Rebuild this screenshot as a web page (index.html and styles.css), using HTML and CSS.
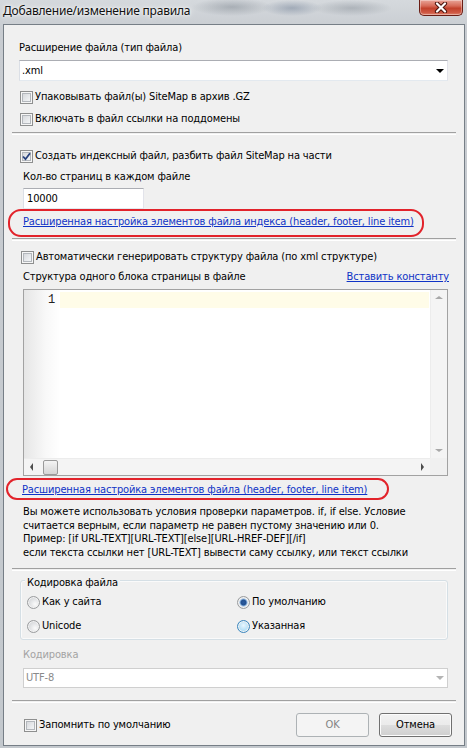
FILE: index.html
```html
<!DOCTYPE html>
<html lang="ru">
<head>
  <meta charset="UTF-8">
  <title>Добавление/изменение правила</title>
  <link rel="stylesheet" href="styles.css">
</head>
<body>
  <div class="window">
    <div class="titlebar">
      <span class="title">Добавление/изменение правила</span>
      <span class="close">
        <svg width="16" height="11" viewBox="0 0 16 11">
          <path d="M4 1.5 L12 9.5 M12 1.5 L4 9.5" stroke="#4a130b" stroke-width="4.2" stroke-linecap="round"/>
          <path d="M4 1.5 L12 9.5 M12 1.5 L4 9.5" stroke="#fff" stroke-width="2.2" stroke-linecap="round"/>
        </svg>
      </span>
    </div>

    <div class="client">
      <div class="pane top">
        <div class="label">Расширение файла (тип файла)</div>
        <div class="combo"><span>.xml</span><i class="arrow"></i></div>
        <label class="check"><span class="box"></span>Упаковывать файл(ы) SiteMap в архив .GZ</label>
        <label class="check second"><span class="box"></span>Включать в файл ссылки на поддомены</label>
      </div>
      <div class="sep"></div>

      <div class="pane index">
        <label class="check"><span class="box"><svg width="9" height="9" viewBox="0 0 9 9"><path d="M1 4.5 L3.5 7.2 L8 1.2" fill="none" stroke="#27417c" stroke-width="1.8"/></svg></span>Создать индексный файл, разбить файл SiteMap на части</label>
        <div class="label indent">Кол-во страниц в каждом файле</div>
        <div class="field">10000</div>
        <div class="link-row indent"><a class="link mark-a" href="#">Расширенная настройка элементов файла индекса (header, footer, line item)</a></div>
      </div>
      <div class="sep"></div>

      <div class="pane structure">
        <label class="check"><span class="box"></span>Автоматически генерировать структуру файла (по xml структуре)</label>
        <div class="label-row">
          <span>Структура одного блока страницы в файле</span>
          <a class="link" href="#">Вставить константу</a>
        </div>
        <div class="editor">
          <div class="gutter">1</div>
          <div class="code"><div class="current"></div></div>
          <div class="vscroll"><i class="tri up"></i><i class="tri down"></i></div>
          <div class="hscroll"><i class="tri left"></i><span class="thumb"></span><i class="tri right"></i></div>
          <div class="corner"></div>
        </div>
        <div class="link-row second-link"><a class="link mark-b" href="#">Расширенная настройка элементов файла (header, footer, line item)</a></div>
        <div class="hint">
          <div>Вы можете использовать условия проверки параметров. if, if else. Условие</div>
          <div>считается верным, если параметр не равен пустому значению или 0.</div>
          <div>Пример: [if URL-TEXT][URL-TEXT][else][URL-HREF-DEF][/if]</div>
          <div>если текста ссылки нет [URL-TEXT] вывести саму ссылку, или текст ссылки</div>
        </div>
      </div>
      <div class="sep"></div>

      <div class="pane encoding">
        <div class="group">
          <div class="group-title">Кодировка файла</div>
          <div class="radio-row">
            <label class="radio"><span class="dot"></span>Как у сайта</label>
            <label class="radio checked"><span class="dot"></span>По умолчанию</label>
          </div>
          <div class="radio-row second">
            <label class="radio"><span class="dot"></span>Unicode</label>
            <label class="radio hover"><span class="dot"></span>Указанная</label>
          </div>
        </div>
        <div class="label indent disabled">Кодировка</div>
        <div class="combo off"><span>UTF-8</span><i class="arrow"></i></div>
      </div>
      <div class="sep"></div>

      <div class="footer">
        <label class="check"><span class="box"></span>Запомнить по умолчанию</label>
        <span class="btn off">OK</span>
        <span class="btn">Отмена</span>
      </div>
    </div>
  </div>
</body>
</html>
```

FILE: styles.css
```css
body { margin: 0; background: #c9cdd1; font: 11px/14px "DejaVu Sans Condensed", "DejaVu Sans", sans-serif; letter-spacing: -0.14px; color: #000; }
.window { width: 467px; height: 748px; display: flex; flex-direction: column;
  background:
    radial-gradient(ellipse 40px 9px at 232px 7px, rgba(90,100,112,.35), transparent),
    radial-gradient(ellipse 30px 8px at 292px 8px, rgba(70,90,120,.35), transparent),
    radial-gradient(ellipse 40px 8px at 352px 8px, rgba(90,100,112,.3), transparent),
    linear-gradient(#d5d9dd, #c8ccd1 30px, #c3c8cd); }

/* title bar */
.titlebar { height: 24px; display: flex; align-items: flex-start; }
.title { margin: 3px 0 0 3px; font: 12px/16px "Noto Sans", "Open Sans", sans-serif; letter-spacing: -0.2px; color: #111; text-shadow: 0 0 6px #fff, 0 0 3px #fff; }
.close { margin-left: auto; margin-right: 4px; width: 44px; height: 16px; box-sizing: border-box; display: flex; align-items: center; justify-content: center;
  border: 1px solid #6a1d14; border-top: 0; border-radius: 0 0 5px 5px;
  background: linear-gradient(#e9a598, #d66a57 40%, #c2412b 55%, #cf5a45 85%, #e08a74); box-shadow: inset 0 0 0 1px rgba(255,255,255,.35); }

/* client area */
.client { margin: 0 2px 2px 3px; border: 1px solid #767e86; background: #f0f0f0; padding: 0 8px 8px; }
.pane { margin: 0 8px; }
.pane.top { margin-left: 7px; padding-top: 16px; }
.sep { height: 1px; border-top: 1px solid #a0a0a0; border-bottom: 0; box-shadow: 0 1px 0 #fff; margin-top: 5px; }
.index + .sep { margin-top: 9px; }
.structure + .sep { margin-top: 9px; }
.encoding + .sep { margin-top: 12px; }

.label { height: 14px; white-space: nowrap; }
.indent { padding-left: 3px; }
.disabled { color: #a3a3a3; }

.combo { height: 21px; box-sizing: border-box; margin-top: 5px; display: flex; align-items: center; justify-content: space-between; padding-left: 2px;
  background: #fff; border: 1px solid; border-color: #abadb3 #e2e3ea #e3e9ef #dbdfe6; }
.arrow { width: 0; height: 0; border-left: 4px solid transparent; border-right: 4px solid transparent; border-top: 4px solid #000; margin-right: 3px; }
.combo.off { height: 20px; margin: 6px 0 0 3px; color: #8a8a8a; border-color: #cfcfcf; }
.combo.off .arrow { border-top-color: #b4b4b4; }

/* checkboxes */
.check { display: flex; align-items: center; gap: 2px; height: 16px; white-space: nowrap; margin-top: 8px; }
.check.second { margin-top: 6px; }
.box { width: 13px; height: 13px; box-sizing: border-box; margin-left: 1px; border: 1px solid #8e8f8f; display: flex; align-items: center; justify-content: center;
  background: linear-gradient(135deg, #cfd1d5, #eef0f2 70%, #f8f8f8); box-shadow: inset 0 0 0 1px #f6f6f6, inset 0 0 0 2px #b3b7bc; }
.index .check { margin-top: 14px; }
.index .box { margin-left: 0; }
.index .label { margin-top: 6px; }
.field { width: 121px; height: 21px; box-sizing: border-box; margin: 4px 0 0 3px; padding-left: 3px; line-height: 19px; background: #fff;
  border: 1px solid; border-color: #abadb3 #e2e3ea #e3e9ef #dbdfe6; }

.link-row { height: 14px; margin-top: 6px; white-space: nowrap; }
.link { color: #0f33c6; text-decoration: underline; position: relative; }
.mark-a::after, .mark-b::after { content: ""; position: absolute; border: 2px solid #e2232b; border-radius: 13px; }
.mark-a::after { left: -15px; top: -6px; width: 412px; height: 24px; }
.mark-b::after { left: -16px; top: -5px; width: 379px; height: 18px; }

/* structure editor */
.structure .check { margin-top: 9px; }
.label-row { display: flex; justify-content: space-between; height: 14px; margin-top: 5px; padding-left: 3px; white-space: nowrap; }
.label-row .link { margin-right: -1px; }
.editor { height: 187px; box-sizing: border-box; margin: 5px 0 0 3px; border: 1px solid #a2a2a2; background: #fff;
  display: grid; grid-template-columns: 36px 1fr 17px; grid-template-rows: 1fr 17px; }
.gutter { background: linear-gradient(to right, #e6e6e6, #f8f8f8 60%, #fff); text-align: right; padding: 2px 5px 0 0; font: 12px/16px "Liberation Mono", monospace; color: #222; }
.code { padding-top: 2px; }
.current { height: 16px; background: #fffce8; margin-right: 1px; }
.vscroll { background: #f4f4f4; border-left: 1px solid #ececec; display: flex; flex-direction: column; justify-content: space-between; align-items: center; padding: 6px 0; }
.hscroll { grid-column: 1 / 3; background: #f4f4f4; border-top: 1px solid #ececec; display: flex; align-items: center; padding: 0 6px 0 6px; }
.corner { background: #f0f0f0; }
.tri { width: 0; height: 0; display: block; }
.up { border: 4px solid transparent; border-top: 0; border-bottom: 3px solid #a8a8a8; }
.down { border: 4px solid transparent; border-bottom: 0; border-top: 3px solid #a8a8a8; }
.left { border: 4px solid transparent; border-left: 0; border-right: 3px solid #4d4d4d; }
.right { border: 4px solid transparent; border-right: 0; border-left: 3px solid #4d4d4d; margin-left: auto; }
.thumb { width: 15px; height: 15px; box-sizing: border-box; margin-left: 10px; border: 1px solid #9a9a9a; border-radius: 2px; background: linear-gradient(to bottom, #f4f4f4, #e4e4e4 50%, #d6d6d6); }

.second-link { margin: 7px 0 0 2px; }
.hint { margin-top: 8px; padding-left: 3px; line-height: 13.5px; white-space: nowrap; }

/* encoding group */
.group { margin-top: 10px; border: 1px solid #d5dfe5; border-radius: 3px; padding: 0 0 5px 6px; box-shadow: inset 0 0 0 1px #fafafa; }
.group-title { width: max-content; margin: -5px 0 0 -2px; padding: 0 2px; background: #f0f0f0; height: 14px; }
.radio-row { display: flex; margin-top: 4px; height: 16px; }
.radio-row.second { margin-top: 8px; }
.radio { display: flex; align-items: center; gap: 2px; white-space: nowrap; }
.radio:first-child { width: 210px; }
.dot { width: 13px; height: 13px; box-sizing: border-box; border-radius: 50%; border: 1px solid #9a9c9e; background: radial-gradient(circle at 65% 65%, #fbfbfb, #d6d8db 70%); box-shadow: inset 0 0 0 1px #f2f2f2; }
.checked .dot { background: radial-gradient(circle at 50% 50%, #2a5ba0 0, #23508f 2.5px, #8fb7e1 3.5px, #e6e8ea 4.5px, #d2d5d8 6px); }
.hover .dot { border-color: #3c86bd; background: radial-gradient(circle at 50% 40%, #eaf7fe, #a5d9f5 75%); }
.encoding .label { margin-top: 8px; }

/* footer */
.footer { display: flex; align-items: center; margin-top: 11px; padding: 0 4px 0 11px; height: 24px; }
.footer .check { margin: 0 auto 0 0; }
.btn { width: 73px; height: 24px; box-sizing: border-box; display: flex; align-items: center; justify-content: center; border: 1px solid #707070; border-radius: 3px;
  background: linear-gradient(#f2f2f2, #ebebeb 50%, #dddddd 51%, #cfcfcf); box-shadow: inset 0 0 0 1px #fcfcfc; margin-left: 10px; }
.btn.off { border-color: #adb2b5; background: #f4f4f4; color: #838383; box-shadow: none; }
```
